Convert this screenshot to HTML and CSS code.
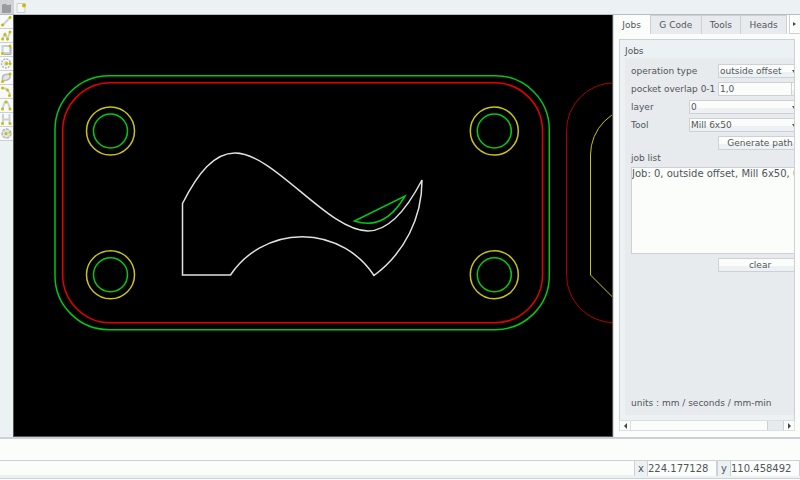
FILE: index.html
```
<!DOCTYPE html>
<html lang="en">
<head>
<meta charset="utf-8">
<title>CAM jobs</title>
<link rel="stylesheet" href="styles.css">
</head>
<body>
<header class="toolbar">
  <button class="tool pressed" aria-label="Open"><svg width="13" height="13" viewBox="0 0 13 13"><path d="M1 4l1-1h3l1 1h3l1-1v8l-1 1H1z" fill="#989c9c"/></svg></button>
  <button class="tool flat" aria-label="New"><svg width="13" height="13" viewBox="0 0 13 13"><path d="M2 2.500h8v9H2z" fill="#f4f6f6" stroke="#ccd0d0"/><circle class="dot" cx="9" cy="4.500" r="2"/></svg></button>
</header>
<main class="workspace">
  <nav class="tools" aria-label="Drawing tools">
    <button class="tool" aria-label="Line"><svg width="13" height="13" viewBox="0 0 13 13"><path class="ink" d="M2.500 10.500l7.500-8"/><path class="dot" d="M1 9.500l1-1h1l1 1v1l-1 1H2l-1-1zM8.500 2l1-1h1l1 1v1l-1 1h-1l-1-1z"/></svg></button>
    <button class="tool" aria-label="Polyline"><svg width="13" height="13" viewBox="0 0 13 13"><path class="ink" d="M2.500 10l2.500-5 2.500 5 2.500-7"/><circle class="dot" cx="2.500" cy="10" r="1.500"/><circle class="dot" cx="5" cy="5.500" r="1.500"/><circle class="dot" cx="7.500" cy="10" r="1.500"/><circle class="dot" cx="10" cy="3" r="1.500"/></svg></button>
    <button class="tool" aria-label="Rectangle"><svg width="13" height="13" viewBox="0 0 13 13"><path class="ink" d="M2.500 3h7.500v7H2.500z"/><path d="M4 11.500h7V4" fill="none" stroke="#a4a8a8"/><circle class="dot" cx="2.500" cy="10.500" r="1.500"/><circle class="dot" cx="10" cy="3" r="1.500"/></svg></button>
    <button class="tool" aria-label="Circle"><svg width="13" height="13" viewBox="0 0 13 13"><circle cx="6" cy="6.500" r="4.500" fill="none" stroke="#b4b8b8" stroke-width="1.500" stroke-dasharray="2 1"/><circle cx="6" cy="6.500" r="2" fill="none" stroke="#ccd0d0"/><circle class="dot" cx="6.500" cy="6.500" r="1.500"/><circle class="dot" cx="10" cy="6.500" r="1.500"/></svg></button>
    <button class="tool" aria-label="Slot"><svg width="13" height="13" viewBox="0 0 13 13"><path d="M2.500 10V7q0-3 3-3.500L10 3v3q0 2-3 3z" fill="#e4e6e6" stroke="#b8bcbc" stroke-width="1.500"/><circle class="dot" cx="2.500" cy="10.500" r="1.500"/><circle class="dot" cx="10" cy="3" r="1.500"/></svg></button>
    <button class="tool" aria-label="Arc"><svg width="13" height="13" viewBox="0 0 13 13"><path class="ink" d="M2.500 3q6 0 7.500 7"/><circle class="dot" cx="2.500" cy="3" r="1.500"/><circle class="dot" cx="7.500" cy="5" r="1.500"/><circle class="dot" cx="9.500" cy="10.500" r="1.500"/></svg></button>
    <button class="tool" aria-label="Curve"><svg width="13" height="13" viewBox="0 0 13 13"><path class="ink" d="M2.500 10q3.500-15 7.500 0"/><circle class="dot" cx="2.500" cy="10" r="1.500"/><circle class="dot" cx="6" cy="3" r="1.500"/><circle class="dot" cx="10" cy="10" r="1.500"/></svg></button>
    <button class="tool" aria-label="Dimension"><svg width="13" height="13" viewBox="0 0 13 13"><path class="ink" d="M3 1v9M9.500 1v9M3 6.500h6"/><circle class="dot" cx="2.500" cy="10.500" r="1.500"/><circle class="dot" cx="10" cy="10.500" r="1.500"/></svg></button>
    <button class="tool" aria-label="Ellipse"><svg width="13" height="13" viewBox="0 0 13 13"><circle cx="6.500" cy="6.500" r="4.500" fill="#e0e3e3" stroke="#b4b8b8" stroke-width="1.500" stroke-dasharray="3 1"/><circle class="dot" cx="6" cy="6.500" r="1.500"/><circle class="dot" cx="9.500" cy="5.500" r="1"/></svg></button>
  </nav>
  <section class="canvas">
    <svg class="drawing" aria-label="Drawing">
      <g transform="translate(-14 -15)" fill="none" stroke-width="1.500">
        <g stroke="#00c814">
          <rect x="55" y="75.700" width="494.300" height="254" rx="54"/>
          <circle cx="110.500" cy="131" r="17"/><circle cx="494.300" cy="131" r="17"/>
          <circle cx="110.500" cy="274.700" r="17"/><circle cx="494.300" cy="274.700" r="17"/>
          <path d="M354.500 221L405 196C394 215 378 229 354.500 221z"/>
        </g>
        <rect x="62.700" y="82.800" width="479.800" height="240" rx="48" stroke="#e60000"/>
        <g stroke="#c8c414">
          <circle cx="110.500" cy="131" r="24"/><circle cx="494.300" cy="131" r="24"/>
          <circle cx="110.500" cy="274.700" r="24"/><circle cx="494.300" cy="274.700" r="24"/>
        </g>
        <path stroke="#e0e2e2" d="M182.500 203.500V275H230.500A86 86 0 0 1 374 275.500A118 118 0 0 0 422 180C410 203 392 231 368 231C328 231 274 153 235 153C214 153 198 173 182.500 203.500z"/>
        <rect x="566.500" y="82.800" width="480" height="240" rx="48" stroke="#b40000" stroke-width="1"/>
        <path stroke="#c8c414" stroke-width="1" d="M638 107A48 48 0 0 0 590.500 155V275L638 322.500"/>
      </g>
    </svg>
  </section>
  <aside class="panel">
    <div class="tabs" role="tablist">
      <button class="tab active" role="tab" aria-selected="true">Jobs</button>
      <button class="tab" role="tab">G Code</button>
      <button class="tab" role="tab">Tools</button>
      <button class="tab" role="tab">Heads</button>
      <button class="more" aria-label="More tabs"><svg width="3" height="4" viewBox="0 0 3 4"><path d="M0 0l3 2-3 2z" fill="#444"/></svg></button>
    </div>
    <div class="page">
      <div class="view">
        <h2 class="title">Jobs</h2>
        <form class="group">
          <div class="row"><label for="op">operation type</label><select id="op" class="field"><option>outside offset</option></select></div>
          <div class="row"><label for="overlap">pocket overlap 0-1</label><span class="spin field"><input id="overlap" value="1,0"></span></div>
          <div class="row"><label for="layer">layer</label><select id="layer" class="field wide"><option>0</option></select></div>
          <div class="row"><label for="bit">Tool</label><select id="bit" class="field wide"><option>Mill 6x50</option></select></div>
          <div class="row end"><button type="button" class="field push">Generate path</button></div>
          <label class="list-label" for="jobs">job list</label>
          <select id="jobs" class="jobs" size="5"><option>Job: 0, outside offset, Mill 6x50, 0</option></select>
          <div class="row end"><button type="button" class="field push">clear</button></div>
          <p class="units">units : mm / seconds / mm-min</p>
        </form>
      </div>
      <div class="scroll">
        <button class="arrow" aria-label="Scroll left"><svg width="3" height="6" viewBox="0 0 3 6"><path d="M3 0L0 3l3 3z" fill="#444"/></svg></button>
        <div class="track"><div class="thumb"></div></div>
        <button class="arrow" aria-label="Scroll right"><svg width="3" height="6" viewBox="0 0 3 6"><path d="M0 0l3 3-3 3z" fill="#444"/></svg></button>
      </div>
    </div>
  </aside>
</main>
<div class="command"></div>
<footer class="status">
  <label for="px">x</label><input id="px" value="224.177128" readonly>
  <label for="py">y</label><input id="py" value="110.458492" readonly>
</footer>
</body>
</html>
```
FILE: styles.css
```
* {
  box-sizing: border-box;
}

body {
  margin: 0;
  height: 100vh;
  display: flex;
  flex-direction: column;
  overflow: hidden;
  background: #fbfdfa;
  color: #50555a;
  font: 9px/14px "DejaVu Sans", sans-serif;
}

button,
select,
input {
  margin: 0;
  padding: 0;
  border: 0;
  border-radius: 0;
  background: #fbfdfa;
  color: inherit;
  font: inherit;
}

svg {
  display: block;
}

.toolbar {
  display: flex;
  flex: none;
  height: 15px;
  background: #ecf1f3;
  border-bottom: 1px solid #b8bcbe;
}

.tool {
  display: flex;
  align-items: center;
  justify-content: center;
  width: 13px;
  height: 14px;
  background: #f8fafa;
  border-bottom: 1px solid #ccd0d4;
}

.dot {
  fill: #c8be00;
}

.ink {
  fill: none;
  stroke: #ccd0d0;
  stroke-width: 2px;
}

.toolbar .tool {
  width: 14px;
  border: 0;
}

.toolbar .pressed {
  background: #d0d2d4;
}

.toolbar .flat {
  background: #ecf1f3;
}

.workspace {
  display: flex;
  flex: 1;
  min-height: 0;
  border-bottom: 2px solid #cdd0d4;
}

.tools {
  flex: none;
  width: 13px;
  background: #ecf1f3;
}

.canvas {
  flex: 1;
  min-width: 0;
  background: #000;
  border: 1px solid #505254;
  border-width: 0 1px 1px;
}

.drawing {
  width: 100%;
  height: 100%;
}

.panel {
  flex: none;
  display: flex;
  flex-direction: column;
  width: 187px;
  border-left: 1px solid #d8dade;
}

.tabs {
  display: flex;
  height: 19px;
}

.tab {
  flex: auto;
  background: #e7ebee;
  border-top: 1px solid #cdd0d4;
  border-right: 1px solid #cdd0d4;
}

.tab.active {
  padding: 0 1px 0 0;
  background: #fbfdfa;
  border-top: 0;
}

.more {
  display: flex;
  align-items: center;
  justify-content: center;
  width: 11px;
  margin-left: 2px;
  border: 1px solid #cdd0d4;
  border-width: 0 0 1px 1px;
}

.page {
  flex: 1;
  display: flex;
  flex-direction: column;
  min-height: 0;
  padding: 5px 5px 6px 5px;
}

.view {
  flex: 1;
  display: flex;
  flex-direction: column;
  min-height: 0;
  overflow: hidden;
  padding: 4px 0 5px 5px;
  background: #ecf1f3;
  border: 1px solid #cdd0d4;
  border-bottom: 0;
}

.title {
  margin: 0;
  font-size: 9px;
  font-weight: normal;
}

.group {
  flex: 1;
  display: flex;
  flex-direction: column;
  gap: 4px;
  margin-right: -8px;
  padding: 6px 0 5px 6px;
  background: #e7ebee;
}

.row {
  display: flex;
  justify-content: space-between;
  height: 14px;
  white-space: nowrap;
}

.row.end {
  justify-content: flex-end;
}

.field {
  width: 84px;
  height: 14px;
  border: 1px solid #cdd0d4;
  background: linear-gradient(#fbfdfa 60%, #ecf1f3 60%);
}

.field.wide {
  width: 113px;
}

select.field {
  appearance: none;
  padding-left: 1px;
  line-height: 12px;
  background: url("data:image/svg+xml,%3Csvg xmlns='http://www.w3.org/2000/svg' width='4' height='3'%3E%3Cpath d='M0 0h4L2 3z' fill='%23505558'/%3E%3C/svg%3E") right 5px center no-repeat, linear-gradient(#fbfdfa 60%, #ecf1f3 60%);
}

.spin input {
  display: block;
  width: 73px;
  height: 12px;
  padding-left: 1px;
  border-right: 1px solid #cdd0d4;
}

.push {
  line-height: 12px;
}

.list-label {
  height: 9px;
  line-height: 9px;
}

.jobs {
  height: 87px;
  overflow: hidden;
  border: 1px solid #cdd0d4;
  font-size: 10px;
  line-height: 12px;
}

.jobs option {
  padding: 0;
}

.units {
  margin: auto 0 0;
}

.scroll {
  display: flex;
  height: 11px;
  border: 1px solid #dcdfe2;
}

.arrow {
  display: flex;
  align-items: center;
  justify-content: center;
  width: 10px;
}

.track {
  flex: 1;
  display: flex;
  justify-content: flex-end;
  border-left: 1px solid #dcdfe2;
}

.thumb {
  width: 17px;
  background: #e7ebee;
  border: 1px solid #cdd0d4;
  border-width: 0 1px;
}

.command {
  flex: none;
  height: 21px;
}

.status {
  flex: none;
  display: flex;
  justify-content: flex-end;
  height: 19px;
  margin-bottom: 1px;
  border-top: 1px solid #cdd0d4;
  border-bottom: 1px solid #cdd0d4;
  box-shadow: inset 0 -3px #ecf1f3;
  font-size: 10px;
}

.status label {
  width: 13px;
  height: 15px;
  line-height: 15px;
  text-align: center;
  background: #ecf1f3;
  border-left: 1px solid #cdd0d4;
}

.status input {
  width: 70px;
  height: 15px;
  border-left: 1px solid #cdd0d4;
  border-right: 1px solid #cdd0d4;
}
```
